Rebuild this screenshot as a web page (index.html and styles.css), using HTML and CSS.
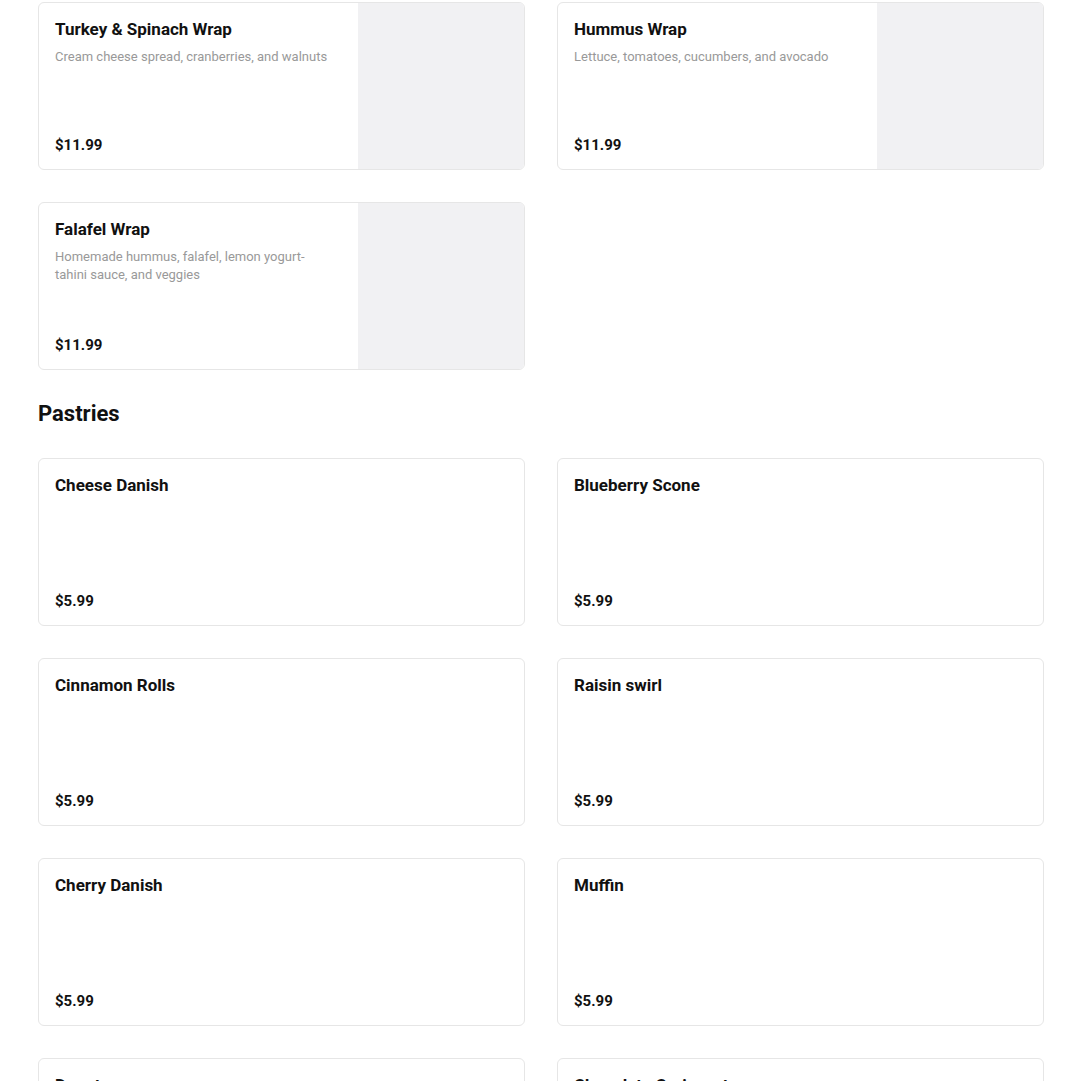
FILE: index.html
```html
<!DOCTYPE html>
<html lang="en">
<head>
<meta charset="utf-8">
<title>Menu</title>
<link rel="stylesheet" href="styles.css">
</head>
<body>
<main class="menu">
  <section class="section">
    <div class="grid">
      <article class="card">
        <div class="card-body">
          <h3 class="card-title">Turkey &amp; Spinach Wrap</h3>
          <p class="card-desc">Cream cheese spread, cranberries, and walnuts</p>
          <div class="card-price">$11.99</div>
        </div>
        <div class="card-image"></div>
      </article>
      <article class="card">
        <div class="card-body">
          <h3 class="card-title">Hummus Wrap</h3>
          <p class="card-desc">Lettuce, tomatoes, cucumbers, and avocado</p>
          <div class="card-price">$11.99</div>
        </div>
        <div class="card-image"></div>
      </article>
      <article class="card">
        <div class="card-body">
          <h3 class="card-title">Falafel Wrap</h3>
          <p class="card-desc">Homemade hummus, falafel, lemon yogurt-tahini sauce, and veggies</p>
          <div class="card-price">$11.99</div>
        </div>
        <div class="card-image"></div>
      </article>
    </div>
  </section>
  <section class="section">
    <h2 class="section-title">Pastries</h2>
    <div class="grid">
      <article class="card"><div class="card-body"><h3 class="card-title">Cheese Danish</h3><div class="card-price">$5.99</div></div></article>
      <article class="card"><div class="card-body"><h3 class="card-title">Blueberry Scone</h3><div class="card-price">$5.99</div></div></article>
      <article class="card"><div class="card-body"><h3 class="card-title">Cinnamon Rolls</h3><div class="card-price">$5.99</div></div></article>
      <article class="card"><div class="card-body"><h3 class="card-title">Raisin swirl</h3><div class="card-price">$5.99</div></div></article>
      <article class="card"><div class="card-body"><h3 class="card-title">Cherry Danish</h3><div class="card-price">$5.99</div></div></article>
      <article class="card"><div class="card-body"><h3 class="card-title">Muffin</h3><div class="card-price">$5.99</div></div></article>
      <article class="card"><div class="card-body"><h3 class="card-title">Donuts</h3><div class="card-price">$5.99</div></div></article>
      <article class="card"><div class="card-body"><h3 class="card-title">Chocolate Croissant</h3><div class="card-price">$5.99</div></div></article>
    </div>
  </section>
</main>
</body>
</html>
```
FILE: styles.css
```css
* { box-sizing: border-box; }
html, body { margin: 0; padding: 0; background: #fff; }
body {
  font-family: Roboto, "Liberation Sans", Arial, sans-serif;
  color: #111;
}
.menu {
  width: 1006px;
  margin-left: 38px;
  padding-top: 2px;
}
.section-title {
  margin: 32px 0 32px;
  font-size: 22px;
  line-height: 24px;
  font-weight: 700;
  color: #111;
}
.grid {
  display: grid;
  grid-template-columns: 1fr 1fr;
  gap: 32px;
}
.card {
  display: flex;
  height: 168px;
  border: 1px solid #e6e6e6;
  border-radius: 6px;
  overflow: hidden;
  background: #fff;
}
.card-body {
  flex: 1;
  display: flex;
  flex-direction: column;
  padding: 16px 16px 15px;
  min-width: 0;
}
.card-title {
  margin: 0;
  font-size: 17px;
  line-height: 21px;
  font-weight: 700;
  color: #111;
}
.card-desc {
  margin: 8px 0 0;
  padding-right: 8px;
  font-size: 13px;
  line-height: 18px;
  color: #999;
}
.card-price {
  margin-top: auto;
  font-size: 15px;
  line-height: 18px;
  font-weight: 700;
  color: #111;
}
.card-image {
  width: 166px;
  flex: none;
  background: #f1f1f3;
}
```
